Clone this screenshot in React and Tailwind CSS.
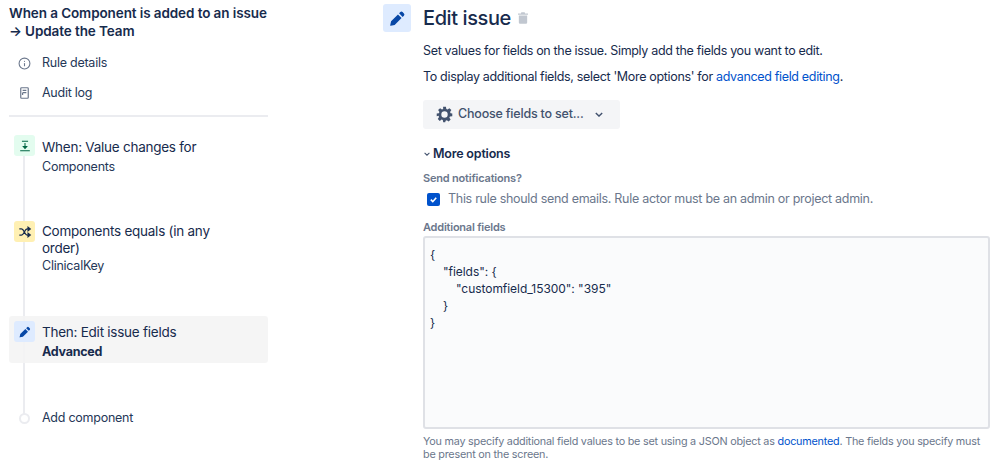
import React from 'react';
import { Info } from 'lucide-react';

const PencilIcon = ({ className }) => (
  <svg viewBox="0 0 24 24" className={className} fill="currentColor">
    <path d="M15.600 3.900a2 2 0 0 1 2.800 0l1.700 1.700a2 2 0 0 1 0 2.800l-1.600 1.600-4.500-4.500 1.600-1.600zM12.600 6.900l4.500 4.500-8.700 8.700-5 1.100a.5.5 0 0 1-.6-.6l1.100-5 8.700-8.700z" />
  </svg>
);

const DocIcon = () => (
  <svg viewBox="0 0 12 16" className="w-[9px] h-[12px] text-[#6b778c]" fill="none" stroke="currentColor" strokeWidth="1.600">
    <rect x="1" y="1" width="10" height="14" rx="1" />
    <path d="M3.500 4.500h5M3.500 7.500h5M3.500 7.500v3" />
  </svg>
);

const ValueIcon = () => (
  <svg viewBox="0 0 16 16" className="w-[14px] h-[14px] text-[#006644]" fill="none" stroke="currentColor" strokeWidth="1.200">
    <path d="M4.500 2.500h7M2.500 13.500h11M8 4.500v5" />
    <path d="M6 8.500 8 10.800l2-2.300z" fill="currentColor" />
  </svg>
);

const ShuffleIcon = () => (
  <svg viewBox="0 0 16 16" className="w-[14px] h-[14px] text-[#172b4d]" fill="none" stroke="currentColor" strokeWidth="1.400">
    <path d="M1.500 4.500h2.500c3 0 3.500 7 6.500 7h2M1.500 11.500h2.500c3 0 3.500-7 6.500-7h2" />
    <path d="m11.500 2.500 2.500 2-2.500 2zM11.500 9.500l2.500 2-2.500 2z" fill="currentColor" />
  </svg>
);

const GearIcon = () => (
  <svg viewBox="0 0 24 24" className="w-[17px] h-[17px] text-[#42526e]" fill="currentColor">
    <path fillRule="evenodd" d="M10 1h4l.6 3.100 1.700.7 2.600-1.800 2.800 2.800-1.800 2.600.7 1.700L23 10.700v3.600l-3.400.6-.7 1.700 1.800 2.600-2.800 2.800-2.600-1.800-1.700.7L13 23h-2.800l-.6-3.100-1.700-.7-2.600 1.800-2.800-2.800 1.800-2.600-.7-1.700L1 14.300v-3.600l3.100-.6.7-1.700L3 5.800 5.800 3l2.600 1.800 1.700-.7zM12 7.500a4.500 4.500 0 1 0 0 9 4.500 4.500 0 0 0 0-9z" />
  </svg>
);

const TrashIcon = () => (
  <svg viewBox="0 0 12 14" className="w-[10px] h-[12px] text-[#c1c7d0]" fill="currentColor">
    <path d="M4 0h4l.5 1.500H12V3H0V1.500h3.500zM1 4h10v8.500A1.500 1.500 0 0 1 9.500 14h-7A1.500 1.500 0 0 1 1 12.500z" />
  </svg>
);

const Chevron = ({ className }) => (
  <svg viewBox="0 0 10 6" className={className} fill="none" stroke="currentColor" strokeWidth="1.700">
    <path d="m1 1 4 4 4-4" />
  </svg>
);

const Sidebar = () => (
  <aside className="w-[259px] ml-[9px] shrink-0">
    <h1 className="pt-[4px] text-[13.500px] leading-[18px] font-semibold text-[#172b4d] tracking-[-0.1px] whitespace-nowrap">
      When a Component is added to an issue
      <br />→ Update the Team
    </h1>
    <div className="mt-[8px] flex items-center h-[30px] text-[12.500px] tracking-[-0.25px] text-[#253858]">
      <span className="w-[33px] pl-[9px]">
        <Info size={13} className="text-[#6b778c]" />
      </span>
      Rule details
    </div>
    <div className="flex items-center h-[30px] text-[12.500px] tracking-[-0.25px] text-[#253858]">
      <span className="w-[33px] pl-[11px]">
        <DocIcon />
      </span>
      Audit log
    </div>
    <div className="mt-[7px] h-[2px] bg-[#ebecf0]" />

    <div className="relative mt-[18px]">
      <div className="absolute left-[14px] top-[4px] h-[278px] w-[2px] bg-[#ebecf0]" />

      <div className="relative h-[86px] flex pl-[5px]">
        <div className="w-[21px] h-[21px] rounded-[3px] bg-[#e3fcef] flex items-center justify-center">
          <ValueIcon />
        </div>
        <div className="pl-[7px] pt-[1px]">
          <div className="text-[13.500px] tracking-[-0.25px] leading-[22px] text-[#172b4d]">When: Value changes for</div>
          <div className="mt-[1px] text-[12.500px] tracking-[-0.25px] leading-[16px] text-[#253858]">Components</div>
        </div>
      </div>

      <div className="relative h-[95px] flex pl-[5px]">
        <div className="w-[21px] h-[21px] rounded-[3px] bg-[#fff0b3] flex items-center justify-center">
          <ShuffleIcon />
        </div>
        <div className="pl-[7px] w-[200px]">
          <div className="text-[13.500px] tracking-[-0.25px] leading-[17px] pt-[2px] text-[#172b4d]">Components equals (in any<br />order)</div>
          <div className="text-[12.500px] tracking-[-0.25px] leading-[16px] text-[#253858] mt-[1px]">ClinicalKey</div>
        </div>
      </div>

      <div className="relative h-[47px] flex pl-[5px] pt-[5px] bg-[#f4f4f4]/90 rounded-[3px]">
        <div className="w-[21px] h-[21px] rounded-[3px] bg-[#deebff] flex items-center justify-center">
          <PencilIcon className="w-[14px] h-[14px] text-[#0747a6]" />
        </div>
        <div className="pl-[7px]">
          <div className="text-[13.500px] tracking-[-0.25px] leading-[22px] text-[#172b4d]">Then: Edit issue fields</div>
          <div className="mt-[1px] text-[12.500px] tracking-[-0.25px] leading-[16px] font-bold text-[#172b4d]">Advanced</div>
        </div>
      </div>

      <div className="relative mt-[45px] flex items-center h-[20px] pl-[10px]">
        <div className="w-[11px] h-[11px] rounded-full bg-white border-2 border-[#ebecf0]" />
        <span className="pl-[12px] text-[12.500px] tracking-[-0.25px] text-[#253858]">Add component</span>
      </div>
    </div>
  </aside>
);

const EditPanel = () => (
  <main className="ml-[115px] w-[607px] flex items-start">
    <div className="w-[28px] h-[28px] mt-[4px] rounded-[3px] bg-[#deebff] flex items-center justify-center shrink-0">
      <PencilIcon className="w-[19px] h-[19px] text-[#0747a6]" />
    </div>
    <div className="ml-[12px] w-[567px]">
      <div className="flex items-center h-[36px]">
        <h2 className="text-[20px] font-medium text-[#172b4d] tracking-[-0.4px]">Edit issue</h2>
        <span className="ml-[7px]"><TrashIcon /></span>
      </div>
      <p className="mt-[6px] text-[12.500px] tracking-[-0.33px] leading-[18px] text-[#172b4d]">
        Set values for fields on the issue. Simply add the fields you want to edit.
      </p>
      <p className="mt-[8px] text-[12.500px] tracking-[-0.33px] leading-[18px] text-[#172b4d]">
        To display additional fields, select 'More options' for <span className="text-[#0052cc]">advanced field editing</span>.
      </p>
      <button className="mt-[14px] w-[197px] h-[29px] rounded-[3px] bg-[#f4f5f7] flex items-center pl-[13px] text-[12.500px] tracking-[-0.2px] font-medium text-[#42526e]">
        <GearIcon />
        <span className="ml-[5px]">Choose fields to set...</span>
        <Chevron className="ml-[11px] w-[8px] h-[5px] text-[#42526e]" />
      </button>
      <div className="mt-[17px] flex items-center h-[16px] text-[12.500px] tracking-[-0.2px] font-semibold text-[#172b4d]">
        <Chevron className="ml-[1px] w-[6px] h-[4px] text-[#42526e]" />
        <span className="ml-[3px]">More options</span>
      </div>
      <div className="mt-[9px] text-[11px] tracking-[-0.2px] leading-[14px] font-semibold text-[#6b778c]">Send notifications?</div>
      <div className="mt-[7px] flex items-center h-[14px] pl-[4px]">
        <div className="w-[13px] h-[13px] rounded-[2px] bg-[#0052cc] flex items-center justify-center">
          <svg viewBox="0 0 10 10" className="w-[9px] h-[9px]" fill="none" stroke="white" strokeWidth="1.800">
            <path d="m2 5.200 2.200 2.200L8 3" />
          </svg>
        </div>
        <span className="ml-[8px] text-[12.500px] tracking-[-0.29px] text-[#6b778c]">
          This rule should send emails. Rule actor must be an admin or project admin.
        </span>
      </div>
      <div className="mt-[14px] text-[11px] tracking-[-0.22px] leading-[14px] font-semibold text-[#6b778c]">Additional fields</div>
      <div className="mt-[2px] h-[193px] rounded-[3px] border-2 border-[#dfe1e6] bg-[#fafbfc] pl-[5px] pt-[8px] text-[12px] tracking-[-0.05px] leading-[17px] text-[#172b4d]">
        <div>{'{'}</div>
        <div className="pl-[13px]">"fields": {'{'}</div>
        <div className="pl-[26px]">"customfield_15300": "395"</div>
        <div className="pl-[13px]">{'}'}</div>
        <div>{'}'}</div>
      </div>
      <p className="mt-[6px] text-[10.800px] tracking-[-0.22px] leading-[13px] text-[#6b778c]">
        You may specify additional field values to be set using a JSON object as <span className="text-[#0052cc]">documented</span>. The fields you specify must be present on the screen.
      </p>
    </div>
  </main>
);

export default function App() {
  return (
    <div className="w-[999px] h-[463px] overflow-hidden bg-white flex font-['Inter',sans-serif]">
      <Sidebar />
      <EditPanel />
    </div>
  );
}
